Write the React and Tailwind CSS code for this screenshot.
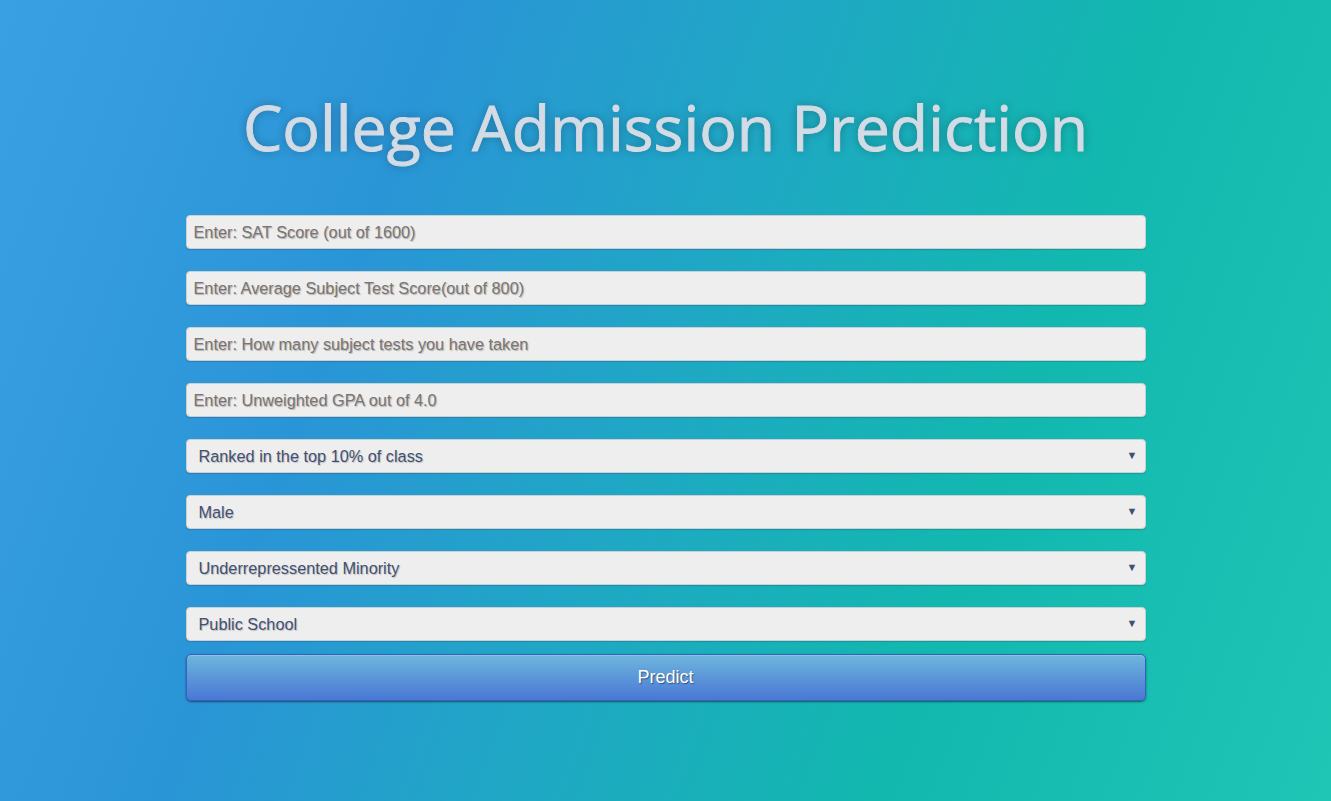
import { useState } from "react";

const textFields = [
  { id: "sat", placeholder: "Enter: SAT Score (out of 1600)" },
  { id: "subject", placeholder: "Enter: Average Subject Test Score(out of 800)" },
  { id: "tests", placeholder: "Enter: How many subject tests you have taken" },
  { id: "gpa", placeholder: "Enter: Unweighted GPA out of 4.0" },
];

const selectFields = [
  { id: "rank", options: ["Ranked in the top 10% of class", "Not ranked in the top 10% of class"] },
  { id: "gender", options: ["Male", "Female"] },
  { id: "minority", options: ["Underrepressented Minority", "Not an Underrepresented Minority"] },
  { id: "school", options: ["Public School", "Private School"] },
];

function SelectBox({ options }) {
  const [value, setValue] = useState(options[0]);
  return (
    <div className="relative">
      <select
        value={value}
        onChange={(e) => setValue(e.target.value)}
        className="block h-[34px] w-full appearance-none rounded-[4px] border border-[#c9cfd4] bg-[#eeeeee] pl-[12px] pr-8 text-[16.3px] text-[#415073] shadow-[0_1px_1px_rgba(0,0,0,0.15)] outline-none [text-shadow:1px_1px_1px_rgba(0,0,0,0.2)]"
      >
        {options.map((o) => (
          <option key={o}>{o}</option>
        ))}
      </select>
      <span className="pointer-events-none absolute right-[8px] top-[9px] text-[11px] leading-[14px] text-[#415073]">
        ▼
      </span>
    </div>
  );
}

export default function App() {
  return (
    <main className="min-h-[801px] w-full bg-[linear-gradient(110deg,#3aa0e4_0%,#2a95d6_28%,#1fa8c4_50%,#12b8ae_72%,#1fc5b5_100%)] font-['Liberation_Sans',Arial,sans-serif]">
      <div className="mx-auto w-[960px] pt-[87px]">
        <h1 className="text-center font-['Open_Sans',sans-serif] text-[62.6px] font-normal leading-[80px] text-[#d3dbe5] [-webkit-text-stroke:0.9px_#d3dbe5] [text-shadow:0_0_10px_rgba(0,0,0,0.3)]">
          College Admission Prediction
        </h1>
        <form className="mt-[48px] flex flex-col" onSubmit={(e) => e.preventDefault()}>
          <div className="flex flex-col gap-[22px]">
            {textFields.map((f) => (
              <input
                key={f.id}
                type="text"
                placeholder={f.placeholder}
                className="block h-[34px] w-full rounded-[4px] border border-[#c9cfd4] bg-[#eeeeee] px-[7px] pt-[1px] text-[16.3px] text-[#555] shadow-[0_1px_1px_rgba(0,0,0,0.15)] outline-none [text-shadow:1px_1px_1px_rgba(0,0,0,0.25)] placeholder:text-[#7a7572]"
              />
            ))}
            {selectFields.map((f) => (
              <SelectBox key={f.id} options={f.options} />
            ))}
          </div>
          <button
            type="submit"
            className="mt-[13px] h-[47px] w-full rounded-[5px] border border-[#3762bc] bg-[linear-gradient(to_bottom,#6eb6de,#4a77d4)] text-[18px] text-white shadow-[inset_0_1px_0_rgba(255,255,255,0.2),0_1px_2px_rgba(0,0,0,0.5)] [text-shadow:1px_1px_1px_rgba(0,0,0,0.4)]"
          >
            Predict
          </button>
        </form>
      </div>
    </main>
  );
}
